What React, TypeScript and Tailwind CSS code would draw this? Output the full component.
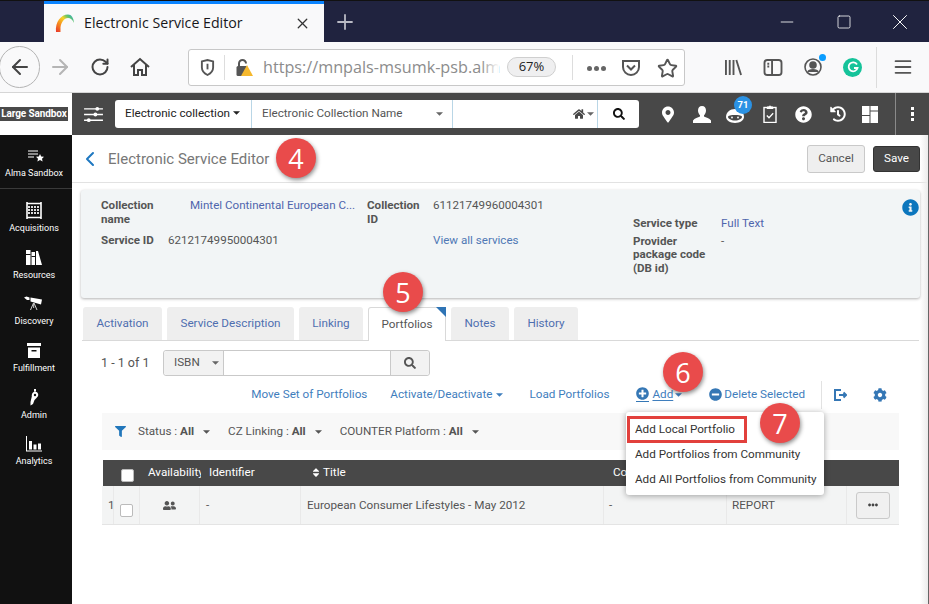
import React from 'react';
import {
  FaCog,
  FaEllipsisH,
  FaFilter,
  FaHistory,
  FaHome,
  FaInfoCircle,
  FaMapMarkerAlt,
  FaMinusCircle,
  FaPlusCircle,
  FaQuestionCircle,
  FaSearch,
  FaSort,
  FaUserFriends,
} from 'react-icons/fa';
import { ArrowLeft, ArrowRight, ChevronLeft, Menu, Minus, Plus, RotateCw, Square, Star, X } from 'lucide-react';

const Caret = ({ className = '' }: { className?: string }) => (
  <svg viewBox="0 0 8 4" className={`w-[7px] h-[4px] fill-current ${className}`}>
    <path d="M0 0h8L4 4z" />
  </svg>
);

const Callout = ({ n, className }: { n: string; className: string }) => (
  <div
    className={`absolute z-30 w-10 h-10 rounded-full bg-[#e94b4b] text-white flex items-center justify-center text-[27px] leading-none shadow-[1px_2px_4px_rgba(0,0,0,0.45)] font-['Open_Sans',sans-serif] ${className}`}
  >
    {n}
  </div>
);

const BrowserChrome = () => (
  <div className="font-['Open_Sans',sans-serif]">
    {/* title bar */}
    <div className="h-[42px] bg-[#20233f] border-t border-[#111] flex items-stretch">
      <div className="ml-[44px] w-[280px] bg-[#f9f9fa] border-t-[3px] border-[#0a84ff] flex items-center pl-[11px] pr-[13px]">
        <svg viewBox="0 0 20 20" className="w-5 h-5 shrink-0">
          <defs>
            <linearGradient id="almaArc" x1="0" y1="1" x2="1" y2="0">
              <stop offset="0" stopColor="#e8322c" />
              <stop offset="0.35" stopColor="#f7931e" />
              <stop offset="0.6" stopColor="#f5d327" />
              <stop offset="0.78" stopColor="#5cc46f" />
              <stop offset="1" stopColor="#2e9fd8" />
            </linearGradient>
          </defs>
          <path d="M1 19C0 9 6 1.500 13 1.500c3.500 0 5.500 3 6 8.500-1.500-3.500-3.500-5-6-5-4 0-7 5-7.500 9.500L5.500 19z" fill="url(#almaArc)" />
        </svg>
        <span className="ml-[9px] -mt-[1px] text-[14.200px] text-[#17171a] whitespace-nowrap">Electronic Service Editor</span>
        <X className="ml-auto w-[17px] h-[17px] text-[#333]" strokeWidth={1.8} />
      </div>
      <Plus className="self-center ml-[9px] w-[24px] h-[24px] text-[#b9bac4]" strokeWidth={1.8} />
      <div className="ml-auto flex items-center pr-[16px] text-white">
        <Minus className="w-[20px] h-[20px]" strokeWidth={1} />
        <Square className="ml-[39px] w-[16px] h-[16px]" strokeWidth={1.2} />
        <X className="ml-[35px] w-[26px] h-[26px]" strokeWidth={0.9} />
      </div>
    </div>
    {/* nav bar */}
    <div className="h-[51px] bg-[#f9f9fa] border-b border-[#d6d6d6] flex items-center">
      <div className="w-[41px] h-[42px] -ml-px rounded-full border border-[#b4b4b4] bg-[#f9f9fa] flex items-center justify-center">
        <ArrowLeft className="w-[24px] h-[24px] text-[#444]" strokeWidth={2} />
      </div>
      <ArrowRight className="ml-[8px] w-[24px] h-[24px] text-[#b5b5b5]" strokeWidth={2} />
      <RotateCw className="ml-[18px] w-[20px] h-[20px] text-[#444]" strokeWidth={2.4} />
      <svg viewBox="0 0 20 20" className="ml-[20px] w-[20px] h-[20px] fill-none stroke-[#444] stroke-2">
        <path d="M1 10 10 2l9 8M4 8v10h4v-5h4v5h4V8" />
      </svg>
      <div className="ml-[38px] w-[497px] h-[37px] bg-white border border-[#c8c8c8] rounded-[3px] flex items-center relative">
        <svg viewBox="0 0 16 18" className="ml-[11px] w-[15px] h-[17px] fill-none stroke-[#555] stroke-2">
          <path d="M2 2.500 8 1l6 1.500V9c0 4-3 6.500-6 8-3-1.500-6-4-6-8z" />
          <path d="M8 5v6" />
        </svg>
        <div className="ml-[9px] w-px h-[25px] bg-[#ddd]" />
        <div className="ml-[10px] relative w-[18px] h-[18px]">
          <svg viewBox="0 0 18 18" className="w-[18px] h-[18px]">
            <path d="M4 9V5.500a3.500 3.500 0 0 1 7 0" fill="none" stroke="#555" strokeWidth="2" />
            <rect x="1.500" y="8" width="11" height="10" rx="1.500" fill="#555" />
            <path d="M12 7l6 11H6z" fill="#f5b82e" />
          </svg>
        </div>
        <div className="relative ml-[10px] w-[236px]">
          <span className="text-[16.200px] text-[#8c8c8c] whitespace-nowrap">https://mnpals-msumk-psb.alm</span>
          <div className="absolute top-0 right-0 bottom-0 w-[18px] bg-gradient-to-r from-transparent to-white" />
        </div>
        <div className="absolute left-[318px] top-[7px] w-[49px] h-[20px] rounded-full bg-[#efeff0] border border-[#cfcfcf] flex items-center justify-center text-[13px] text-[#222]">
          67%
        </div>
        <div className="absolute left-[383px] top-[5px] w-px h-[25px] bg-[#ddd]" />
        <div className="absolute right-[6px] top-[8px] flex items-center">
          <div className="flex gap-[2px]">
            <span className="w-[5px] h-[5px] rounded-full bg-[#666]" />
            <span className="w-[5px] h-[5px] rounded-full bg-[#666]" />
            <span className="w-[5px] h-[5px] rounded-full bg-[#666]" />
          </div>
          <svg viewBox="0 0 20 18" className="ml-[15px] w-[20px] h-[18px] fill-none stroke-[#555] stroke-2">
            <path d="M2 2h16v6a8 8 0 0 1-16 0z" />
            <path d="M6 6.500l4 4 4-4" />
          </svg>
          <Star className="ml-[16px] w-[21px] h-[21px] text-[#555]" strokeWidth={2.2} />
        </div>
      </div>
      <svg viewBox="0 0 20 18" className="ml-[39px] w-[19px] h-[17px] stroke-[#555] stroke-2 fill-none">
        <path d="M2 1v16M6 1v16M10 1v16M13 1l5 16" />
      </svg>
      <svg viewBox="0 0 20 18" className="ml-[20px] w-[20px] h-[17px] stroke-[#555] stroke-2 fill-none">
        <rect x="1" y="1" width="18" height="16" rx="3" />
        <path d="M9 1v16M4 5h2M4 8h2" />
      </svg>
      <div className="relative ml-[21px] w-[18px] h-[18px]">
        <svg viewBox="0 0 18 18" className="w-[18px] h-[18px] stroke-[#555] stroke-[1.6] fill-none">
          <circle cx="9" cy="9" r="8" />
          <circle cx="9" cy="7" r="3" fill="#555" />
          <path d="M4 14c1-3 9-3 10 0" fill="#555" />
        </svg>
        <span className="absolute -top-[4px] -right-[4px] w-[7px] h-[7px] rounded-full bg-[#0a9dff]" />
      </div>
      <div className="ml-[21px] w-[19px] h-[19px] rounded-full bg-[#15c39a] flex items-center justify-center">
        <svg viewBox="0 0 12 12" className="w-[12px] h-[12px] fill-none stroke-white stroke-[1.8]">
          <path d="M10 3.500A4.500 4.500 0 1 0 10.500 7H7" />
        </svg>
      </div>
      <div className="ml-[14px] w-px h-[41px] bg-[#dcdcdc]" />
      <Menu className="ml-[16px] w-[20px] h-[20px] text-[#555] scale-x-110" strokeWidth={2.2} />
    </div>
  </div>
);

const AppHeader = () => (
  <div className="h-[42px] flex font-['Roboto',sans-serif] shrink-0">
    <div className="w-[72px] bg-white flex items-center">
      <span className="bg-[#4a4a4a] text-white text-[10px] font-bold leading-[14px] w-[68px] text-center whitespace-nowrap tracking-[-0.1px]">Large Sandbox</span>
    </div>
    <div className="flex-1 bg-[#484848] flex items-center">
      <svg viewBox="0 0 20 18" className="ml-[12px] w-[19px] h-[17px]">
        <path d="M0 3h20M0 9h20M0 15h20" stroke="#fff" strokeWidth="1.500" />
        <circle cx="14" cy="3" r="2" fill="#fff" />
        <circle cx="12" cy="9" r="2" fill="#fff" />
        <circle cx="5" cy="15" r="2" fill="#fff" />
      </svg>
      <div className="ml-[12px] w-[524px] h-[28px] bg-white rounded-[3px] flex items-stretch text-[11.700px]">
        <div className="w-[137px] border-r border-[#b9d6e6] flex items-center pl-[10px] text-[#222] whitespace-nowrap">
          Electronic collection
          <Caret className="ml-[3px] -mt-[3px] text-[#222]" />
        </div>
        <div className="w-[201px] border-r border-[#b9d6e6] flex items-center pl-[10px] pr-[9px] text-[#555] whitespace-nowrap">
          Electronic Collection Name
          <Caret className="ml-auto text-[#666]" />
        </div>
        <div className="w-[145px] border-r border-[#b9d6e6] flex items-center justify-end pr-[3px] text-[#484848]">
          <FaHome className="w-[12px] h-[12px]" />
          <Caret className="ml-[2px] text-[#666]" />
        </div>
        <div className="flex-1 flex items-center justify-center">
          <FaSearch className="w-[12px] h-[12px] text-[#111]" />
        </div>
      </div>
      <FaMapMarkerAlt className="ml-[23px] w-[12px] h-[17px] text-white" />
      <svg viewBox="0 0 18 17" className="ml-[19px] w-[18px] h-[17px] fill-white">
        <path d="M9 0c2.600 0 4 2 4 4.500 0 2-1 3.800-2 4.800v1.200c2 1 5.500 1.500 7 4V17H0v-2.500c1.500-2.500 5-3 7-4V9.300C6 8.300 5 6.500 5 4.500 5 2 6.400 0 9 0z" />
      </svg>
      <div className="relative ml-[15px] w-[18px] h-[14px]">
        <svg viewBox="0 0 18 14" className="w-[18px] h-[14px] mt-[2px]">
          <path d="M0 8C0 3.500 4 0 9 0s9 3.500 9 8c0 3-4 6-9 6s-9-3-9-6z" fill="#fff" />
          <path d="M2 8c0-1.500 3-2 7-2s7 .5 7 2-3 3.500-7 3.500S2 9.500 2 8z" fill="#484848" />
          <circle cx="6" cy="8.500" r="0.900" fill="#fff" />
          <circle cx="12" cy="8.500" r="0.900" fill="#fff" />
        </svg>
        <span className="absolute -top-[11px] left-[8px] w-[18px] h-[18px] rounded-full bg-[#2b92e4] text-white text-[9.500px] font-bold flex items-center justify-center">71</span>
      </div>
      <svg viewBox="0 0 14 18" className="ml-[19px] w-[14px] h-[18px] fill-none stroke-white">
        <rect x="1" y="2.500" width="12" height="15" strokeWidth="1.400" />
        <path d="M4 3.500V2h2a1 1 0 0 1 2 0h2v1.500z" fill="#fff" strokeWidth="1" />
        <path d="M3.800 10.500l2.200 2.200 4.200-4.400" strokeWidth="1.300" />
      </svg>
      <FaQuestionCircle className="ml-[18px] w-[17px] h-[17px] text-white" />
      <FaHistory className="ml-[18px] w-[16px] h-[16px] text-white" />
      <svg viewBox="0 0 16 17" className="ml-[16px] w-[16px] h-[17px] fill-white">
        <path d="M0 0h7.500v9H0zM8.500 0H16v4.500H8.500zM0 10h7.500v7H0zM8.500 5.500H16V17H8.500z" />
      </svg>
      <div className="ml-[17px] w-px h-[42px] bg-[#8a8a8a]" />
      <div className="ml-[15px] flex flex-col gap-[2px]">
        <span className="w-[3px] h-[3.500px] bg-white" />
        <span className="w-[3px] h-[3.500px] bg-white" />
        <span className="w-[3px] h-[3.500px] bg-white" />
      </div>
    </div>
  </div>
);

const navIcons: { label: string; icon: React.ReactNode }[] = [
  {
    label: 'Acquisitions',
    icon: (
      <svg viewBox="0 0 16 17" className="w-4 h-[17px]">
        <path d="M1 0v17M15 0v17" stroke="#fff" strokeWidth="1.600" />
        <path d="M1 1.500h14M1 15.500h14" stroke="#fff" strokeWidth="1.400" />
        <path d="M2 5h12M2 8h12M2 11h12" stroke="#ddd" strokeWidth="1.800" strokeDasharray="2 1" />
      </svg>
    ),
  },
  {
    label: 'Resources',
    icon: (
      <svg viewBox="0 0 16 16" className="w-4 h-4 fill-white">
        <path d="M0 1h4.500v15H0zM5.500 3H9v13H5.500zM10 2h2l4 14h-6z" />
        <path d="M0 5h4.500v1H0zM5.500 7H9v1H5.500z" fill="#111" />
      </svg>
    ),
  },
  {
    label: 'Discovery',
    icon: (
      <svg viewBox="0 0 19 15" className="w-[19px] h-[15px]">
        <path d="M0 1.500l2.500-1 3 1v2.500L3 4zM6.500 1.500L18 3.500l-1 5-10.500-3z" fill="#fff" />
        <path d="M9.500 7l-3 7M10 7l3 7M9.700 7v5" stroke="#ccc" strokeWidth="1" />
      </svg>
    ),
  },
  {
    label: 'Fulfillment',
    icon: (
      <svg viewBox="0 0 14 15" className="w-[14px] h-[15px] fill-white">
        <path d="M0 0h14v3H0zM1 4.500h12V15H1z" />
        <path d="M4.500 7h5v1.500h-5z" fill="#111" />
      </svg>
    ),
  },
  {
    label: 'Admin',
    icon: (
      <svg viewBox="0 0 10 17" className="w-[10px] h-[17px] fill-white">
        <path d="M6 2.500a3.400 3.400 0 0 1 1.500 6.400L5.500 11 4 15l-2.500 1.500L1.500 13 2.800 7.500C2.500 5 4 2.500 6 2.500z" />
        <path d="M5 0h2v2.500H5z" />
        <circle cx="6" cy="6" r="1.200" fill="#111" />
      </svg>
    ),
  },
  {
    label: 'Analytics',
    icon: (
      <svg viewBox="0 0 16 16" className="w-4 h-4 fill-white">
        <path d="M0 0h1v14.500h16v1H0zM3 5h3v8.500H3zM7.500 8.500h3v5h-3zM12 7.500h3v6h-3z" />
      </svg>
    ),
  },
];

const Sidebar = () => (
  <div className="w-[72px] bg-[#111] shrink-0 flex flex-col items-center text-white text-[9px] leading-[12px] font-['Roboto',sans-serif]">
    <div className="w-full h-[54px] border-b border-[#3a3a3a] flex flex-col items-center pt-[15px] pr-[4px]">
      <svg viewBox="0 0 16 12" className="w-4 h-3 ml-[4px]">
        <path d="M0 1h10M0 4h10M0 7h6" stroke="#fff" strokeWidth="1.200" />
        <path d="M12 4l1.200 2.500 2.800.3-2 1.900.6 2.800-2.600-1.400-2.600 1.400.6-2.800-2-1.900 2.800-.3z" fill="#fff" />
      </svg>
      <span className="mt-[5px]">Alma Sandbox</span>
    </div>
    <div className="flex flex-col items-center w-full pr-[4px] pt-[12px] gap-[10.700px]">
      {navIcons.map(item => (
        <div key={item.label} className="h-[36px] flex flex-col items-center">
          <div className="h-[19px] flex items-center justify-center">{item.icon}</div>
          <span className="mt-[2px]">{item.label}</span>
        </div>
      ))}
    </div>
  </div>
);

const InfoPanel = () => (
  <div className="relative mx-[9px] mt-[7px] h-[108px] bg-[#f2f5f6] rounded-[3px] shadow-[0_1px_3px_rgba(0,0,0,0.3)] pl-[20px] pt-[9px] flex text-[11.600px] leading-[13.500px] text-[#555]">
    <div className="w-[266px]">
      <div className="flex">
        <b className="w-[89px] shrink-0 pr-[20px]">Collection name</b>
        <span className="text-[#4f65ad] whitespace-nowrap">Mintel Continental European C...</span>
      </div>
      <div className="flex mt-[8px]">
        <b className="w-[67px] shrink-0">Service ID</b>
        <span className="text-[#555]">62121749950004301</span>
      </div>
    </div>
    <div className="w-[266px]">
      <div className="flex">
        <b className="w-[66px] shrink-0 pr-[10px]">Collection ID</b>
        <span>61121749960004301</span>
      </div>
      <div className="flex mt-[8px] pl-[66px]">
        <span className="text-[#4f78b5]">View all services</span>
      </div>
    </div>
    <div className="pt-[18px]">
      <div className="flex">
        <b className="w-[88px] shrink-0">Service type</b>
        <span className="text-[#4f65ad]">Full Text</span>
      </div>
      <div className="flex mt-[4px]">
        <b className="w-[88px] shrink-0">Provider package code (DB id)</b>
        <span>-</span>
      </div>
    </div>
    <FaInfoCircle className="absolute top-[9px] right-[1px] w-[17px] h-[17px] text-[#0c76bd]" />
  </div>
);

const tabs = [
  { label: 'Activation', width: 'w-[79px]' },
  { label: 'Service Description', width: 'w-[127px]' },
  { label: 'Linking', width: 'w-[64px]' },
  { label: 'Portfolios', width: 'w-[78px]' },
  { label: 'Notes', width: 'w-[58px]' },
  { label: 'History', width: 'w-[64px]' },
];

const Tabs = () => (
  <div className="mx-[10px] mt-[9px] h-[34px] border-b border-[#d9d9d9] flex gap-[5px] pl-[1px] text-[11.700px]">
    {tabs.map(t =>
      t.label === 'Portfolios' ? (
        <div key={t.label} className={`relative h-[34px] ${t.width} bg-white border border-b-0 border-[#d9d9d9] rounded-t-[3px] flex items-center justify-center text-[#555]`}>
          {t.label}
          <span className="absolute -top-px -right-px w-0 h-0 border-t-[10px] border-l-[10px] border-t-[#2f74b5] border-l-transparent" />
        </div>
      ) : (
        <div key={t.label} className={`h-[33px] ${t.width} bg-[#eeeeee] rounded-t-[3px] flex items-center justify-center text-[#4f6fb0] whitespace-nowrap`}>
          {t.label}
        </div>
      )
    )}
  </div>
);

const actionLink = 'text-[#3f7ebd] whitespace-nowrap';

const Toolbar = () => (
  <>
    <div className="ml-[29px] mt-[9px] h-[26px] flex items-center text-[11.700px] text-[#555]">
      <span className="w-[62px] text-[12.500px]">1 - 1 of 1</span>
      <div className="w-[267px] h-[26px] border border-[#c9c9c9] rounded-[3px] flex items-stretch">
        <div className="w-[60px] bg-[#f2f2f2] border-r border-[#c9c9c9] flex items-center pl-[10px] rounded-l-[3px]">
          ISBN
          <Caret className="ml-[12px] text-[#666]" />
        </div>
        <div className="flex-1 bg-white" />
        <div className="w-[39px] bg-[#f2f2f2] border-l border-[#c9c9c9] flex items-center justify-center rounded-r-[3px]">
          <FaSearch className="w-[12px] h-[12px] text-[#555]" />
        </div>
      </div>
    </div>
    <div className="mt-[6px] h-[26px] flex items-center justify-end pr-[42px] text-[11.700px]">
      <span className={actionLink}>Move Set of Portfolios</span>
      <span className={`${actionLink} ml-[23px] flex items-center`}>
        Activate/Deactivate
        <Caret className="ml-[3px]" />
      </span>
      <span className={`${actionLink} ml-[27px]`}>Load Portfolios</span>
      <span className={`${actionLink} ml-[27px] flex items-center`}>
        <span className="border-b border-[#3577b5] pb-[1px] mr-[3px]">
          <FaPlusCircle className="w-[13px] h-[13px] text-[#3577b5]" />
        </span>
        <span className="underline underline-offset-2">Add</span>
        <Caret className="ml-[2px]" />
      </span>
      <span className={`${actionLink} ml-[27px] flex items-center`}>
        <FaMinusCircle className="w-[13px] h-[13px] mr-[2px] text-[#3577b5]" />
        Delete Selected
      </span>
      <div className="ml-[16px] w-px h-[28px] bg-[#e2e2e2]" />
      <svg viewBox="0 0 14 14" className="ml-[11px] w-[14px] h-[14px] fill-none stroke-[#3577b5] stroke-2">
        <path d="M8 2H2v10h6M6 7h7M10.500 4.500 13 7l-2.500 2.500" />
      </svg>
      <FaCog className="ml-[26px] w-[14px] h-[14px] text-[#3577b5]" />
    </div>
  </>
);

const FilterBar = () => (
  <div className="ml-[30px] mr-[30px] mt-[5px] h-[37px] bg-[#f8f8f8] flex items-center text-[11.700px] text-[#555] whitespace-nowrap">
    <FaFilter className="ml-[12px] w-[13px] h-[11px] text-[#2277bb]" />
    <span className="ml-[11px] pt-[1px]">Status : <b>All</b></span>
    <Caret className="ml-[9px] text-[#555]" />
    <span className="ml-[18px] pt-[1px]">CZ Linking : <b>All</b></span>
    <Caret className="ml-[9px] text-[#555]" />
    <span className="ml-[18px] pt-[1px]">COUNTER Platform : <b>All</b></span>
    <Caret className="ml-[9px] text-[#555]" />
  </div>
);

const Checkbox = ({ className = '' }: { className?: string }) => (
  <span className={`block w-[13px] h-[13px] rounded-[2px] border border-[#bbb] ${className}`} />
);

const PortfolioTable = () => (
  <div className="ml-[30px] mr-[30px] mt-[10px] text-[11.700px]">
    <div className="h-[26px] ml-px bg-[#484848] text-white flex items-center">
      <div className="w-[37px] pl-[18px]">
        <Checkbox className="bg-white mt-[4px]" />
      </div>
      <div className="w-[61px] pl-[8px] overflow-hidden whitespace-nowrap -mt-[1px]">Availability</div>
      <div className="w-[98px] pl-[8px] -mt-[1px]">Identifier</div>
      <div className="w-[303px] pl-[13px] flex items-center -mt-[1px]">
        <FaSort className="w-[8px] h-[11px] mr-[3px]" />
        Title
      </div>
      <div className="w-[122px] pl-[11px] -mt-[1px]">Co</div>
    </div>
    <div className="h-[39px] bg-[#f3f4f4] border-b border-[#e4e4e4] flex items-stretch text-[#555]">
      <div className="w-[12px] border-r border-[#e9e9e9] pl-[6px] pt-[11px]">1</div>
      <div className="w-[26px] border-r border-[#e9e9e9] pl-[6px] pt-[18px]">
        <Checkbox className="bg-white" />
      </div>
      <div className="w-[60px] border-r border-[#e9e9e9] flex items-center justify-center">
        <FaUserFriends className="w-[13px] h-[11px] text-[#555]" />
      </div>
      <div className="w-[101px] border-r border-[#e9e9e9] pl-[6px] pt-[1px] flex items-center">-</div>
      <div className="w-[303px] border-r border-[#e9e9e9] pl-[6px] pt-[1px] flex items-center whitespace-nowrap">European Consumer Lifestyles - May 2012</div>
      <div className="w-[123px] border-r border-[#e9e9e9] pl-[5px] pt-[1px] flex items-center">-</div>
      <div className="w-[120px] border-r border-[#e9e9e9] pl-[5px] pt-[1px] flex items-center">REPORT</div>
      <div className="flex-1 flex items-center pl-[9px]">
        <div className="w-[34px] h-[27px] bg-[#f0f0f0] border border-[#cacaca] rounded-[3px] flex items-center justify-center">
          <FaEllipsisH className="w-[10px] h-[10px] text-[#444]" />
        </div>
      </div>
    </div>
  </div>
);

const AddMenu = () => (
  <div className="absolute z-20 left-[554px] top-[277px] w-[198px] h-[83px] bg-white rounded-[3px] shadow-[0_1px_6px_rgba(0,0,0,0.35)] text-[11.700px] text-[#333] pl-[9px] pt-[5px] leading-[25px] whitespace-nowrap">
    <div className="absolute left-[1px] top-[4px] w-[120px] h-[27px] border-[3px] border-[#e2403c]" />
    <div>Add Local Portfolio</div>
    <div>Add Portfolios from Community</div>
    <div>Add All Portfolios from Community</div>
  </div>
);

const App: React.FC = () => (
  <div className="h-screen w-full flex flex-col overflow-hidden bg-white">
    <BrowserChrome />
    <AppHeader />
    <div className="flex-1 flex min-h-0">
      <Sidebar />
      <div className="relative flex-1 font-['Roboto',sans-serif]">
        {/* page header */}
        <div className="h-[48px] border-b border-[#e2e2e2] flex items-center">
          <ChevronLeft className="ml-[6px] w-[24px] h-[24px] text-[#1f78c1]" strokeWidth={2} />
          <span className="ml-[6px] pt-[1px] text-[15px] text-[#777]">Electronic Service Editor</span>
          <div className="ml-auto flex items-center pr-[9px] gap-[8px] text-[11.700px]">
            <button className="w-[58px] h-[28px] bg-[#efefef] border border-[#c9c9c9] rounded-[3px] text-[#555]">Cancel</button>
            <button className="w-[47px] h-[26px] bg-[#484848] border border-[#333] rounded-[3px] text-white">Save</button>
          </div>
        </div>
        <InfoPanel />
        <Tabs />
        <Toolbar />
        <FilterBar />
        <PortfolioTable />
        <AddMenu />
        <Callout n="4" className="left-[204px] top-[3px]" />
        <Callout n="5" className="left-[311px] top-[137px]" />
        <Callout n="6" className="left-[591px] top-[217px]" />
        <Callout n="7" className="left-[688px] top-[268px]" />
        {/* window edge on the right */}
        <div className="absolute top-0 right-0 bottom-0 w-[9px] bg-gradient-to-r from-transparent to-[#ebebeb] border-r border-[#666]" />
      </div>
    </div>
  </div>
);

export default App;
